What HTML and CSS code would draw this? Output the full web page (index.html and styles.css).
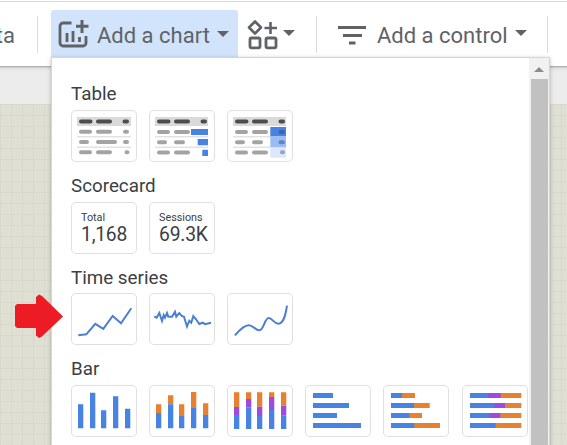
FILE: index.html
```html
<!DOCTYPE html>
<html lang="en">
<head>
    <meta charset="UTF-8">
    <meta name="viewport" content="width=device-width, initial-scale=1.0">
    <title>Add a chart</title>
    <link rel="stylesheet" href="styles.css">
</head>
<body>
    <div class="toolbar">
        <div class="tool tool-data">ta</div>
        <div class="tool tool-chart active">
            <svg class="icon" width="32" height="32" viewBox="0 0 32 32" fill="none" stroke="#5f6368">
                <path d="M14.500 5H6a3 3 0 0 0-3 3v17a3 3 0 0 0 3 3h20a3 3 0 0 0 3-3V18" stroke-width="2.800"/>
                <path d="M10 15v9M16 13v11M22.500 19v5" stroke-width="2.800"/>
                <path d="M25 2v13M19 8.300h12.500" stroke-width="3"/>
            </svg>
            <span class="tool-label">Add a chart</span>
            <span class="caret"></span>
        </div>
        <div class="tool tool-shapes">
            <svg class="icon" width="32" height="32" viewBox="0 0 32 32" fill="none" stroke="#5f6368">
                <path d="M9 2.500l6 6-6 6-6-6z" stroke-width="2.600" stroke-linejoin="round"/>
                <path d="M24.500 3v12M18.500 9H31" stroke-width="2.600"/>
                <rect x="4" y="19" width="10" height="9.800" rx="1.500" stroke-width="2.800"/>
                <rect x="20" y="19" width="10" height="9.800" rx="1.500" stroke-width="2.800"/>
            </svg>
            <span class="caret"></span>
        </div>
        <div class="tool tool-control">
            <svg class="icon" width="30" height="20" viewBox="0 0 30 20" fill="#5f6368">
                <path d="M1 1h28v3H1zM6 9h19v3H6zM12 16.500h6.500v3H12z"/>
            </svg>
            <span class="tool-label">Add a control</span>
            <span class="caret"></span>
        </div>
    </div>
    <div class="ruler"></div>
    <div class="canvas"></div>

    <div class="menu">
        <div class="menu-list">
            <h2>Table</h2>
            <div class="cards">
                <div class="card">
                    <svg width="66" height="52" viewBox="0 0 66 52">
                        <path class="head" d="M6 7h54v9H6z"/>
                        <path class="line" d="M6 26.800h54M6 37.200h54"/>
                        <path class="dark" d="M10 11.500h9.500M27 11.500h12M53.500 11.500h2.500"/>
                        <path class="grey" d="M10 21.800h9M27 21.800h12M54 21.800h2M10 32h6M27 32h17M54 32h2M10 42.200h9M27 42.200h12M55.500 42.200h1"/>
                    </svg>
                </div>
                <div class="card">
                    <svg width="66" height="52" viewBox="0 0 66 52">
                        <path class="head" d="M6 7h53v9H6z"/>
                        <path class="line" d="M6 26.800h53M6 37.200h53"/>
                        <path class="dark" d="M10 11.500h9.500M27 11.500h12M53.500 11.500h2.500"/>
                        <path class="grey" d="M10 22h9M27 22h12M10 32.200h6M27 32.200h7M10 42.500h9M27 42.500h12"/>
                        <path class="blue" d="M42 19h17v6H42zM48.700 29H59v6.300H48.700zM53.300 39.700H59V46h-5.700z"/>
                    </svg>
                </div>
                <div class="card">
                    <svg width="66" height="52" viewBox="0 0 66 52">
                        <path class="head" d="M6 7h53v9H6z"/>
                        <path class="line" d="M6 26.800h53M6 37.200h53"/>
                        <path class="blue" d="M43.300 17H59v9.300H43.300z"/>
                        <path fill="#9bbcf7" d="M43.300 26.300H59v11H43.300z"/>
                        <path fill="#dbe7fc" d="M43.300 37.300H59v10.400H43.300z"/>
                        <path class="dark" d="M10 11.500h9.500M27 11.500h12M53.500 11.500h2.500"/>
                        <path class="grey" d="M10 22h9M27 22h12M10 32.200h6M27 32.200h7M10 42.500h9M27 42.500h12"/>
                        <path class="grey tint-1" d="M53.500 22h2.500"/>
                        <path class="grey tint-2" d="M53.500 32.200h2.500"/>
                        <path class="grey tint-3" d="M55 42.200h1"/>
                    </svg>
                </div>
            </div>

            <h2>Scorecard</h2>
            <div class="cards">
                <div class="card score">
                    <span class="score-name">Total</span>
                    <span class="score-value">1,168</span>
                </div>
                <div class="card score">
                    <span class="score-name">Sessions</span>
                    <span class="score-value">69.3K</span>
                </div>
            </div>

            <h2>Time series</h2>
            <div class="cards">
                <div class="card">
                    <svg width="66" height="52" viewBox="0 0 66 52">
                        <path class="series" d="M7.300 42.300l8-1 9-10.500 8 5 9.400-12.800 8.300 7.300L60.300 15.300"/>
                    </svg>
                </div>
                <div class="card">
                    <svg width="66" height="52" viewBox="0 0 66 52">
                        <path class="series" d="M5.300 23.500l2.400 1.200L10.300 20 13 28l1.700-6 1.300 2.700 2-4.700 1.300 3.700H23l3-5 1.300 5 3-3.700 2.400 3 2.300.7L38 33.500l2.300-5.800 2 2 2-6.700 2.700 3.300 3.300 4.700 3.400-1.300L56 31.200l6-1.500"/>
                    </svg>
                </div>
                <div class="card">
                    <svg width="66" height="52" viewBox="0 0 66 52">
                        <path class="series" d="M8 42.300C13 36.500 17.500 32.300 21.700 32.300 26 32.300 28.500 37.300 32.300 37.300 37 37.300 37.500 25 41.700 25c3.500 0 5.300 5.700 9.700 5.700C57 30.700 58.800 20.500 60 12.700"/>
                    </svg>
                </div>
            </div>

            <h2>Bar</h2>
            <div class="cards">
                <div class="card">
                    <svg width="66" height="52" viewBox="0 0 66 52">
                        <path class="blue" d="M7 19.300h5.300v24H7zM19 7.700h5.300v35.600H19zM30 25.300h5.300v18H30zM42 11.300h5.300v32H42zM54 23.700h5.300v19.600H54z"/>
                    </svg>
                </div>
                <div class="card">
                    <svg width="66" height="52" viewBox="0 0 66 52">
                        <path class="orange" d="M7 19.300h5.300V28H7zM19 10.300h5.300v9H19zM30 19.300h5.300V31H30zM42 7h5.300v15.300H42zM54 18.300h5.300V30H54z"/>
                        <path class="blue" d="M7 28h5.300v15.300H7zM19 19.300h5.300v24H19zM30 31h5.300v12.300H30zM42 22.300h5.300v21H42zM54 30h5.300v13.300H54z"/>
                    </svg>
                </div>
                <div class="card">
                    <svg width="66" height="52" viewBox="0 0 66 52">
                        <path class="orange" d="M7 7.300h5.300V22H7zM19 7.300h5.300V14H19zM30 7.300h5.300v14.400H30zM42 7.300h5.300V12H42zM54 7.300h5.300v13.400H54z"/>
                        <path class="purple" d="M7 22h5.300v8H7zM19 14h5.300v8.300H19zM30 21.700h5.300V31H30zM42 12h5.300v13H42zM54 20.700h5.300v10H54z"/>
                        <path class="blue" d="M7 30h5.300v14H7zM19 22.300h5.300V44H19zM30 31h5.300v13H30zM42 25h5.300v19H42zM54 30.700h5.300V44H54z"/>
                    </svg>
                </div>
                <div class="card">
                    <svg width="66" height="52" viewBox="0 0 66 52">
                        <path class="blue" d="M8 8h20v5H8zM8 18h36v5H8zM8 28h24v5H8zM8 38h48v5H8z"/>
                    </svg>
                </div>
                <div class="card">
                    <svg width="66" height="52" viewBox="0 0 66 52">
                        <path class="orange" d="M8 8h24v5H8zM8 18h38.700v5H8zM8 28h31v5H8zM8 38h49v5H8z"/>
                        <path class="blue" d="M8 8h11v5H8zM8 18h23v5H8zM8 28h18.300v5H8zM8 38h23.300v5H8z"/>
                    </svg>
                </div>
                <div class="card">
                    <svg width="66" height="52" viewBox="0 0 66 52">
                        <path class="orange" d="M8 8h51.300v5H8zM8 18h51.300v5H8zM8 28h51.300v5H8zM8 38h51.300v5H8z"/>
                        <path class="purple" d="M8 8h30.700v5H8zM8 18h35v5H8zM8 28h30.300v5H8z"/>
                        <path class="blue" d="M8 8h17.700v5H8zM8 18h24.300v5H8zM8 28h19v5H8zM8 38h25.700v5H8z"/>
                    </svg>
                </div>
            </div>
        </div>
        <div class="scrollbar">
            <div class="scroll-up"></div>
            <div class="scroll-thumb"></div>
        </div>
    </div>

    <!-- pointer to the time series row -->
    <svg class="pointer" width="50" height="46" viewBox="0 0 50 46">
        <path d="M3 11h19V4l3-2.500L28 3l21 20.500L28 43.500 25 45l-3-2.500V35H3l-2-2V13z" fill="#ed1c24"/>
    </svg>
</body>
</html>
```

FILE: styles.css
```css
* {
    box-sizing: border-box;
}
body {
    margin: 0;
    height: 445px;
    position: relative;
    overflow: hidden;
    display: flex;
    flex-direction: column;
    font-family: Roboto, Arial, sans-serif;
    color: #3c4043;
    background: #fff;
}
.toolbar {
    display: flex;
    height: 66px;
    flex-shrink: 0;
    padding-top: 9px;
    border-top: 1px solid #fff;
    box-shadow: inset 0 1px 0 #d8d8d8;
}
.tool {
    display: flex;
    align-items: center;
    height: 48px;
    color: #5f6368;
    font-size: 22px;
    white-space: nowrap;
}
.tool-data {
    width: 38px;
    height: 37px;
    margin: 6px 13px 0 0;
    padding-top: 1px;
    justify-content: flex-end;
    padding-right: 22px;
    border-right: 1px solid #dadce0;
}
.tool-chart {
    width: 187px;
    padding-left: 6px;
    border-radius: 3px 3px 0 0;
}
.tool-chart.active {
    background: #d2e3fc;
}
.tool-chart .tool-label {
    margin-left: 8px;
    padding-top: 2px;
}
.tool-shapes {
    width: 79px;
    height: 37px;
    margin-top: 6px;
    padding-left: 8px;
    border-right: 1px solid #dadce0;
}
.tool-control {
    width: 232px;
    height: 37px;
    margin-top: 6px;
    margin-left: -1px;
    padding-left: 21px;
    border-right: 1px solid #dadce0;
}
.tool-control .tool-label {
    margin-left: 10px;
    padding-top: 1px;
}
.icon {
    display: block;
    flex-shrink: 0;
}
.caret {
    margin: 0 0 3px 7px;
    border: 6px solid transparent;
    border-top-color: #5f6368;
    border-bottom: 0;
}
.tool-chart .caret {
    margin-bottom: 1px;
}
.tool-shapes .caret {
    margin-left: 5px;
}
.ruler {
    height: 38px;
    flex-shrink: 0;
    background: linear-gradient(#a0a0a0, #dedede 2px, #ececec 5px);
}
.canvas {
    flex: 1;
    background-color: #dfe0d3;
    background-image:
        linear-gradient(to right, #d8d9cc 1px, transparent 1px),
        linear-gradient(#d8d9cc 1px, transparent 1px);
    background-size: 11px 11px;
}
.menu {
    position: absolute;
    left: 51px;
    top: 57px;
    width: 499px;
    height: 400px;
    display: flex;
    background: #fff;
    border: 1px solid #d6d6d6;
    box-shadow: 0 1px 4px rgba(0,0,0,0.25);
}
.menu-list {
    width: 477px;
    padding: 20.3px 0 0 19px;
    overflow: hidden;
}
.menu h2 {
    margin: 0;
    height: 31.7px;
    font-size: 18.8px;
    font-weight: 400;
    line-height: 32px;
}
.cards {
    display: flex;
    gap: 12px;
    height: 52px;
    margin-bottom: 8px;
}
.card {
    width: 66px;
    height: 52px;
    flex-shrink: 0;
    border-radius: 5px;
    box-shadow: inset 0 0 0 1px #dfdfdf;
}
.card:nth-child(6) {
    margin-left: 1px;
}
.card svg {
    display: block;
}
.score {
    display: flex;
    flex-direction: column;
    padding: 9px 0 0 10px;
}
.score-name {
    font-size: 10.8px;
    line-height: 13px;
}
.score-value {
    font-size: 19.3px;
    line-height: 22px;
    letter-spacing: -0.2px;
}
.head {
    fill: #dadada;
}
.line {
    stroke: #d4d4d4;
    stroke-width: 1;
}
.dark, .grey {
    stroke: #4d4d4d;
    stroke-width: 4;
    stroke-linecap: round;
}
.grey {
    stroke: #a3a3a3;
}
.tint-1 {
    stroke: #3a66b0;
}
.tint-2 {
    stroke: #6585bd;
}
.tint-3 {
    stroke: #94a4c2;
}
.blue {
    fill: #4683e3;
}
.orange {
    fill: #e8812f;
}
.purple {
    fill: #9c4be0;
}
.series {
    fill: none;
    stroke: #4a80cf;
    stroke-width: 2;
}
.scrollbar {
    display: flex;
    flex-direction: column;
    align-items: center;
    width: 20px;
    background: #f1f1f1;
}
.scroll-up {
    height: 21px;
    padding-top: 9px;
}
.scroll-up::before {
    content: "";
    display: block;
    border: 5px solid transparent;
    border-bottom-color: #8c8c8c;
    border-top: 0;
}
.scroll-thumb {
    flex: 1;
    width: 17px;
    background: #c1c1c1;
}
.pointer {
    position: absolute;
    left: 14px;
    top: 293px;
}
```
